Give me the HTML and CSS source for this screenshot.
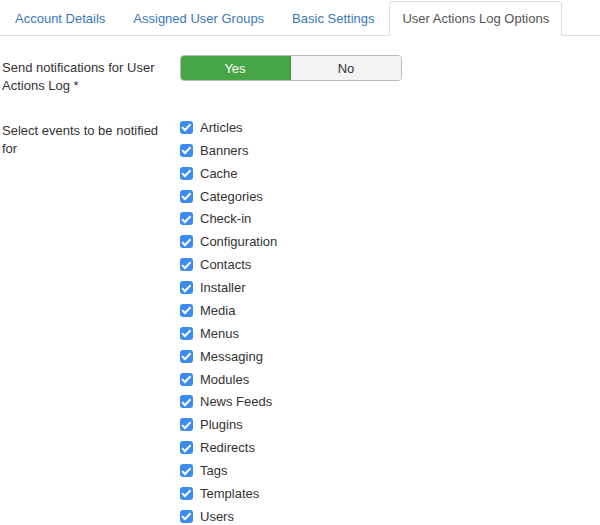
FILE: index.html
```html
<!DOCTYPE html>
<html>
<head>
<meta charset="utf-8">
<link rel="stylesheet" href="styles.css">
</head>
<body>
<ul class="tabs">
  <li><a>Account Details</a></li>
  <li><a>Assigned User Groups</a></li>
  <li><a>Basic Settings</a></li>
  <li class="active"><a>User Actions Log Options</a></li>
</ul>
<div class="form">
  <div class="row row-toggle">
    <div class="label">Send notifications for User Actions Log *</div>
    <div class="control">
      <div class="toggle">
        <span class="opt yes">Yes</span>
        <span class="opt no">No</span>
      </div>
    </div>
  </div>
  <div class="row row-list">
    <div class="label label-list">Select events to be notified for</div>
    <div class="control">
      <ul class="checks">
        <li><span class="cb"></span>Articles</li>
        <li><span class="cb"></span>Banners</li>
        <li><span class="cb"></span>Cache</li>
        <li><span class="cb"></span>Categories</li>
        <li><span class="cb"></span>Check-in</li>
        <li><span class="cb"></span>Configuration</li>
        <li><span class="cb"></span>Contacts</li>
        <li><span class="cb"></span>Installer</li>
        <li><span class="cb"></span>Media</li>
        <li><span class="cb"></span>Menus</li>
        <li><span class="cb"></span>Messaging</li>
        <li><span class="cb"></span>Modules</li>
        <li><span class="cb"></span>News Feeds</li>
        <li><span class="cb"></span>Plugins</li>
        <li><span class="cb"></span>Redirects</li>
        <li><span class="cb"></span>Tags</li>
        <li><span class="cb"></span>Templates</li>
        <li><span class="cb"></span>Users</li>
      </ul>
    </div>
  </div>
</div>
</body>
</html>
```
FILE: styles.css
```css
html, body {
  margin: 0;
  padding: 0;
  background: #fff;
}
body {
  font-family: "Liberation Sans", Arial, sans-serif;
  font-size: 13px;
  color: #333;
  padding-top: 1px;
}
.tabs {
  list-style: none;
  margin: 0;
  padding: 0 0 0 2px;
  display: flex;
  border-bottom: 1px solid #ddd;
}
.tabs li {
  margin-bottom: -1px;
  margin-right: 2px;
}
.tabs a {
  display: block;
  padding: 7px 12px 7px;
  line-height: 19px;
  border: 1px solid transparent;
  border-radius: 4px 4px 0 0;
  color: #3a78b8;
}
.tabs .active a {
  color: #555;
  background: #fff;
  border-color: #ddd #ddd transparent;
}
.form {
  padding-top: 19px;
}
.row {
  display: flex;
}
.row-toggle {
  margin-bottom: 21px;
}
.label {
  width: 160px;
  margin-right: 20px;
  padding-left: 2px;
  box-sizing: border-box;
  line-height: 18px;
}
.row-toggle .label {
  padding-top: 4px;
}
.label-list {
  padding-top: 6px;
}
.toggle {
  display: flex;
  width: 222px;
  height: 26px;
  box-sizing: border-box;
  border-radius: 4px;
  overflow: hidden;
  border: 1px solid #bbb;
}
.opt {
  flex: 1;
  display: flex;
  align-items: center;
  justify-content: center;
}
.yes {
  background: #46a546;
  color: #fff;
  border-right: 1px solid #3c8f3c;
  margin: -1px 0 -1px -1px;
}
.no {
  background: #f3f3f3;
  color: #333;
}
.checks {
  list-style: none;
  margin: 0;
  padding: 0;
}
.checks li {
  display: flex;
  align-items: center;
  height: 22.88px;
}
.cb {
  width: 13px;
  height: 13px;
  border-radius: 3px;
  background: #3b8cf0;
  margin-right: 7px;
  position: relative;
}
.cb::after {
  content: "";
  position: absolute;
  left: 4px;
  top: 1.5px;
  width: 3px;
  height: 6.5px;
  border: solid #fff;
  border-width: 0 2px 2px 0;
  transform: rotate(45deg);
}
```
